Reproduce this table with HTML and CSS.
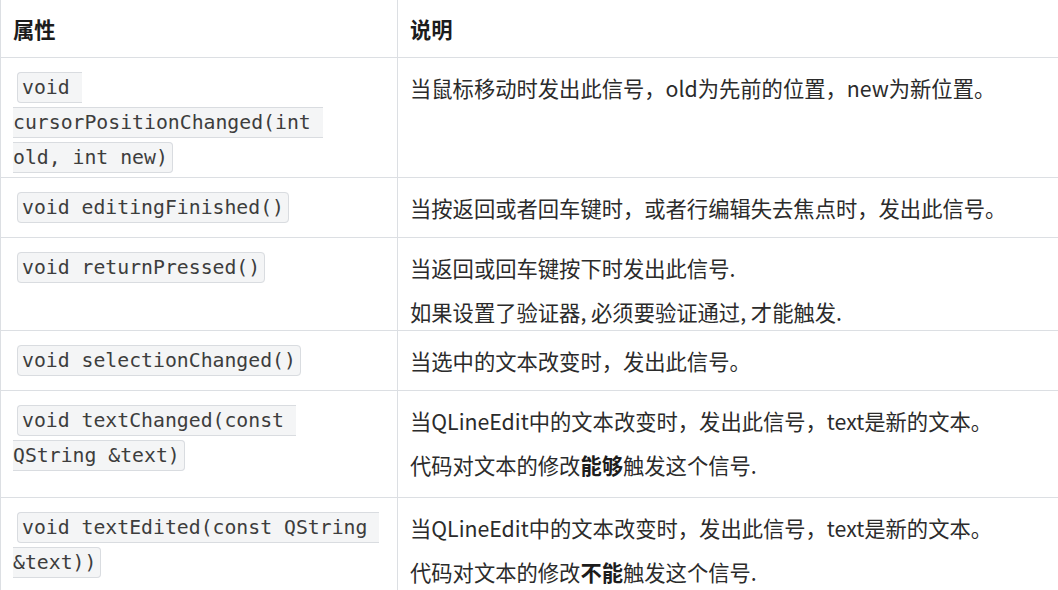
FILE: index.html
```html
<!DOCTYPE html>
<html lang="zh-CN">
<head>
<meta charset="utf-8">
<title>QLineEdit 信号</title>
<link rel="stylesheet" href="styles.css">
</head>
<body>
<table class="sig-table">
  <colgroup>
    <col class="col-prop">
    <col class="col-desc">
  </colgroup>
  <thead>
    <tr>
      <th>属性</th>
      <th>说明</th>
    </tr>
  </thead>
  <tbody>
    <tr class="tight first">
      <td class="prop"><code>void cursorPositionChanged(int old, int new)</code></td>
      <td class="desc"><p>当鼠标移动时发出此信号，old为先前的位置，new为新位置。</p></td>
    </tr>
    <tr>
      <td class="prop"><code>void editingFinished()</code></td>
      <td class="desc"><p>当按返回或者回车键时，或者行编辑失去焦点时，发出此信号。</p></td>
    </tr>
    <tr class="tight">
      <td class="prop"><code>void returnPressed()</code></td>
      <td class="desc"><p>当返回或回车键按下时发出此信号.</p><p>如果设置了验证器, 必须要验证通过, 才能触发.</p></td>
    </tr>
    <tr>
      <td class="prop"><code>void selectionChanged()</code></td>
      <td class="desc"><p>当选中的文本改变时，发出此信号。</p></td>
    </tr>
    <tr class="roomy">
      <td class="prop"><code>void textChanged(const QString &amp;text)</code></td>
      <td class="desc"><p>当QLineEdit中的文本改变时，发出此信号，text是新的文本。</p><p>代码对文本的修改<strong>能够</strong>触发这个信号.</p></td>
    </tr>
    <tr>
      <td class="prop"><code>void textEdited(const QString &amp;text))</code></td>
      <td class="desc"><p>当QLineEdit中的文本改变时，发出此信号，text是新的文本。</p><p>代码对文本的修改<strong>不能</strong>触发这个信号.</p></td>
    </tr>
  </tbody>
</table>
</body>
</html>
```

FILE: styles.css
```css
html, body {
  margin: 0;
  padding: 0;
  background: #ffffff;
  overflow: hidden;
}

body {
  font-family: "Noto Sans CJK SC", "Noto Sans", sans-serif;
  font-size: 21.3px;
  color: #2b2b2b;
}

.sig-table {
  width: 1058px;
  table-layout: fixed;
  border-collapse: separate;
  border-spacing: 0;
  border-left: 1px solid #dcdfe3;
}

.col-prop {
  width: 397px;
}

.sig-table th,
.sig-table td {
  border-bottom: 1px solid #dcdfe3;
  text-align: left;
  vertical-align: top;
  line-height: 35px;
}

.sig-table th:first-child,
.sig-table td:first-child {
  border-right: 1px solid #dcdfe3;
}

.sig-table th {
  font-weight: 700;
  color: #1c1c1c;
  padding: 11px 12px 11px 12px;
}

.sig-table td {
  padding: 12px 12px 12px 12px;
}

.sig-table td.prop {
  padding-right: 28px;
}

.sig-table tr.tight td {
  padding-bottom: 1px;
}

.sig-table tr.tight.first td {
  padding-bottom: 2px;
}

.sig-table tr.roomy td {
  padding-bottom: 15px;
}

.desc p {
  margin: 0 0 9px 0;
}

.desc p:last-child {
  margin-bottom: 0;
}

.desc strong {
  font-weight: 700;
  color: #1c1c1c;
}

.prop code {
  font-family: "DejaVu Sans Mono", "Liberation Mono", monospace;
  font-size: 19.8px;
  line-height: 35px;
  vertical-align: top;
  white-space: pre-wrap;
  color: #3d3d3d;
  background: #f4f5f6;
  border: 1px solid #d9dce0;
  border-radius: 4px;
  padding: 3px 4px;
  margin: 0 4px;
  -webkit-box-decoration-break: slice;
  box-decoration-break: slice;
}
```
